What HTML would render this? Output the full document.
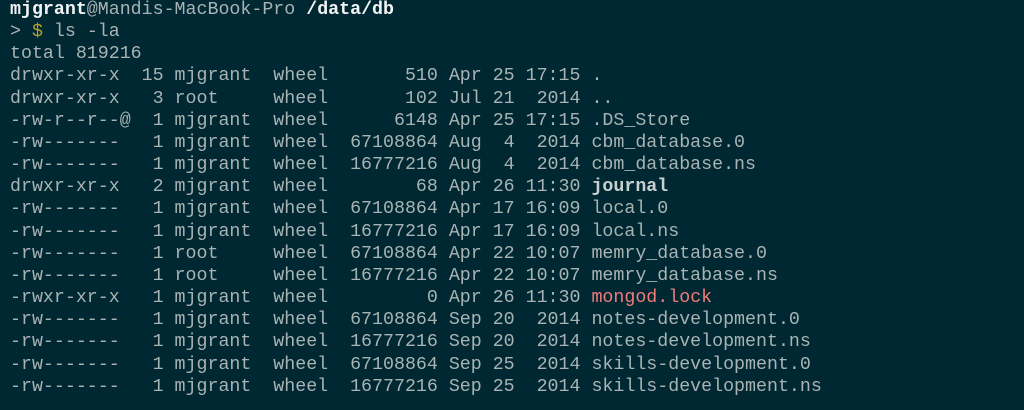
<!DOCTYPE html>
<html><head><meta charset="utf-8"><style>
html,body{margin:0;padding:0;width:1024px;height:410px;background:#002833;overflow:hidden}
pre{margin:0;position:absolute;left:10px;top:-1px;font-family:"Liberation Mono","DejaVu Sans Mono",monospace;font-size:18.3px;line-height:22.15px;color:#a8b3b3}
b{color:#f2f4f4;font-weight:bold}
.y{color:#b5a12a}.r{color:#f07b7b}
</style></head><body><pre><b>mjgrant</b>@Mandis-MacBook-Pro <b>/data/db</b>
&gt; <span class="y">$</span> ls -la
total 819216
drwxr-xr-x  15 mjgrant  wheel       510 Apr 25 17:15 .
drwxr-xr-x   3 root     wheel       102 Jul 21  2014 ..
-rw-r--r--@  1 mjgrant  wheel      6148 Apr 25 17:15 .DS_Store
-rw-------   1 mjgrant  wheel  67108864 Aug  4  2014 cbm_database.0
-rw-------   1 mjgrant  wheel  16777216 Aug  4  2014 cbm_database.ns
drwxr-xr-x   2 mjgrant  wheel        68 Apr 26 11:30 <b style="color:#c8d0d0">journal</b>
-rw-------   1 mjgrant  wheel  67108864 Apr 17 16:09 local.0
-rw-------   1 mjgrant  wheel  16777216 Apr 17 16:09 local.ns
-rw-------   1 root     wheel  67108864 Apr 22 10:07 memry_database.0
-rw-------   1 root     wheel  16777216 Apr 22 10:07 memry_database.ns
-rwxr-xr-x   1 mjgrant  wheel         0 Apr 26 11:30 <span class="r">mongod.lock</span>
-rw-------   1 mjgrant  wheel  67108864 Sep 20  2014 notes-development.0
-rw-------   1 mjgrant  wheel  16777216 Sep 20  2014 notes-development.ns
-rw-------   1 mjgrant  wheel  67108864 Sep 25  2014 skills-development.0
-rw-------   1 mjgrant  wheel  16777216 Sep 25  2014 skills-development.ns</pre></body></html>
